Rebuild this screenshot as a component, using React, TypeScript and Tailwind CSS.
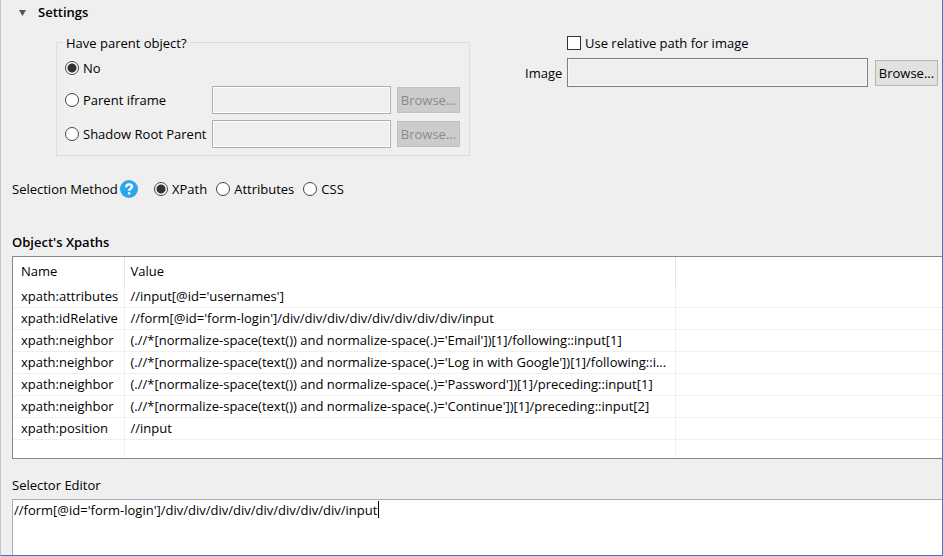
import { useState } from 'react';
import type { ReactNode } from 'react';

const XPATHS: { name: string; value: string }[] = [
  { name: 'xpath:attributes', value: "//input[@id='usernames']" },
  { name: 'xpath:idRelative', value: "//form[@id='form-login']/div/div/div/div/div/div/div/div/input" },
  { name: 'xpath:neighbor', value: "(.//*[normalize-space(text()) and normalize-space(.)='Email'])[1]/following::input[1]" },
  { name: 'xpath:neighbor', value: "(.//*[normalize-space(text()) and normalize-space(.)='Log in with Google'])[1]/following::i..." },
  { name: 'xpath:neighbor', value: "(.//*[normalize-space(text()) and normalize-space(.)='Password'])[1]/preceding::input[1]" },
  { name: 'xpath:neighbor', value: "(.//*[normalize-space(text()) and normalize-space(.)='Continue'])[1]/preceding::input[2]" },
  { name: 'xpath:position', value: '//input' },
];

type RadioProps = {
  name: string;
  checked: boolean;
  onSelect: () => void;
  children: ReactNode;
};

function Radio({ name, checked, onSelect, children }: RadioProps) {
  return (
    <label className="flex items-center gap-1 whitespace-nowrap">
      <input
        type="radio"
        name={name}
        checked={checked}
        onChange={onSelect}
        className="size-[14px] shrink-0 appearance-none rounded-full border border-[#444] bg-white checked:bg-[radial-gradient(circle,#333_0_4px,#fff_5px)]"
      />
      {children}
    </label>
  );
}

function BrowseButton({ disabled = false }: { disabled?: boolean }) {
  return (
    <button
      type="button"
      disabled={disabled}
      className="h-[26px] w-[63px] shrink-0 border border-[#b5b5b5] bg-[#e1e1e1] text-center disabled:border-[#c0c0c0] disabled:bg-[#cccccc] disabled:text-[#8a8a8a]"
    >
      Browse...
    </button>
  );
}

function ParentObject() {
  const [parent, setParent] = useState('no');
  return (
    <fieldset className="relative h-[114px] w-[414px] shrink-0 border border-[#dcdcdc] pt-4 pr-[9px] pl-2">
      <legend className="absolute -top-[9px] left-[6px] bg-[#efefef] px-[3px]">Have parent object?</legend>
      <div className="flex h-[18px] items-center">
        <Radio name="parent" checked={parent === 'no'} onSelect={() => setParent('no')}>No</Radio>
      </div>
      <div className="mt-[9px] flex flex-col gap-[6px]">
        {[
          { id: 'iframe', label: 'Parent iframe' },
          { id: 'shadow', label: 'Shadow Root Parent' },
        ].map(({ id, label }) => (
          <div key={id} className="flex items-center">
            <div className="w-[147px]">
              <Radio name="parent" checked={parent === id} onSelect={() => setParent(id)}>{label}</Radio>
            </div>
            <input
              type="text"
              aria-label={label}
              disabled
              className="mr-[6px] h-7 min-w-0 flex-1 border border-[#abadb3] bg-[#efefef] px-1 shadow-[inset_0_0_0_1px_#fff]"
            />
            <BrowseButton disabled />
          </div>
        ))}
      </div>
    </fieldset>
  );
}

function ImagePath() {
  return (
    <div className="min-w-0 flex-1 pr-1">
      <label className="mt-[34px] ml-[42px] flex h-[18px] items-center gap-1">
        <input
          type="checkbox"
          className="size-[14px] shrink-0 appearance-none border border-[#333] bg-white checked:bg-[#333]"
        />
        Use relative path for image
      </label>
      <div className="mt-[6px] flex items-center">
        <label htmlFor="image" className="w-[42px] shrink-0">Image</label>
        <input
          id="image"
          type="text"
          readOnly
          className="mr-[7px] h-[29px] min-w-0 flex-1 border border-[#7f7f7f] bg-[#efefef] px-1 shadow-[inset_0_0_0_1px_#f7f7f7] outline-none"
        />
        <BrowseButton />
      </div>
    </div>
  );
}

function SelectionMethod() {
  const [method, setMethod] = useState('XPath');
  return (
    <div className="mt-6 flex h-[18px] items-center">
      <span className="w-[108px] whitespace-nowrap">Selection Method</span>
      <button
        type="button"
        aria-label="Help"
        className="mr-4 flex size-[18px] shrink-0 items-center justify-center rounded-full bg-[#2ba5ee] text-white"
      >
        <svg viewBox="0 0 18 18" className="size-[18px]" fill="none" stroke="currentColor" strokeWidth="2.4">
          <path d="M6.2 7.2C6.2 5.3 7.3 4.4 9.1 4.4s2.8 1 2.8 2.4c0 2-2.8 2-2.8 4" />
          <path d="M9.1 12.2v2.3" />
        </svg>
      </button>
      <div className="flex items-center gap-[9px]">
        {['XPath', 'Attributes', 'CSS'].map((item) => (
          <Radio key={item} name="method" checked={method === item} onSelect={() => setMethod(item)}>{item}</Radio>
        ))}
      </div>
    </div>
  );
}

function XpathTable() {
  return (
    <div className="mt-[5px] h-[203px] border border-r-0 border-[#828790] bg-white">
      <table className="w-full table-fixed border-collapse text-left">
        <colgroup>
          <col className="w-[111px]" />
          <col className="w-[551px]" />
          <col />
        </colgroup>
        <thead>
          <tr className="h-7">
            <th className="border-r border-[#e5e5e5] p-0 pl-2 font-normal">Name</th>
            <th className="border-r border-[#e5e5e5] p-0 pl-[6px] font-normal">Value</th>
            <th className="p-0" />
          </tr>
        </thead>
        <tbody>
          {XPATHS.map(({ name, value }) => (
            <tr key={value} className="h-[22px] border-b border-[#f0f0f0]">
              <td className="border-r border-[#edf1f6] p-0 pl-2 whitespace-nowrap">{name}</td>
              <td className="border-r border-[#edf1f6] p-0 pl-[6px] whitespace-nowrap">{value}</td>
              <td className="p-0" />
            </tr>
          ))}
          <tr className="h-[18px]">
            <td className="border-r border-[#edf1f6] p-0" />
            <td className="border-r border-[#edf1f6] p-0" />
            <td className="p-0" />
          </tr>
        </tbody>
      </table>
    </div>
  );
}

function SelectorEditor() {
  const [selector, setSelector] = useState(XPATHS[1].value);
  return (
    <>
      <label htmlFor="selector" className="mt-[17px] block">Selector Editor</label>
      <div className="relative mt-[5px] flex min-h-12 flex-1">
        <textarea
          id="selector"
          value={selector}
          onChange={(event) => setSelector(event.target.value)}
          className="w-full resize-none border-t border-l border-[#abadb3] bg-white px-[1px] py-[1px] outline-none"
        />
        <span aria-hidden="true" className="absolute top-[2px] left-[366px] h-[17px] w-px bg-black" />
      </div>
    </>
  );
}

export default function App() {
  const [open, setOpen] = useState(true);
  return (
    <main className="flex min-h-screen flex-col border-r border-b border-l border-r-[#4472c4] border-b-[#4472c4] border-l-[#c4c4c4] bg-[#efefef] pl-[11px] font-['Open_Sans','Noto_Sans',sans-serif] text-[13px] leading-[18px] text-black">
      <h2 className="mt-[3px] font-semibold">
        <button type="button" aria-expanded={open} onClick={() => setOpen(!open)} className="flex items-center gap-3 pl-[7px]">
          <svg viewBox="0 0 7 6" className="mt-[2px] h-[6px] w-[7px]" fill="#555">
            <path d="M0 0h7L3.5 6z" />
          </svg>
          Settings
        </button>
      </h2>
      {open && (
        <>
          <div className="flex gap-[55px] pl-11">
            <div className="pt-[21px]">
              <ParentObject />
            </div>
            <div className="-mt-[21px] flex min-w-0 flex-1">
              <ImagePath />
            </div>
          </div>
          <SelectionMethod />
          <h3 className="mt-[35px] font-semibold">Object's Xpaths</h3>
          <XpathTable />
          <SelectorEditor />
        </>
      )}
    </main>
  );
}
